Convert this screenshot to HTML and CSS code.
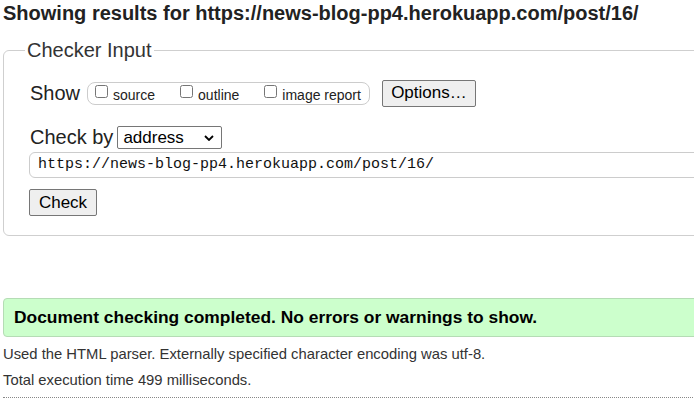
FILE: index.html
```html
<!DOCTYPE html>
<html lang="en">
<head>
<meta charset="utf-8">
<title>Showing results for https://news-blog-pp4.herokuapp.com/post/16/</title>
<link rel="stylesheet" href="styles.css">
</head>
<body>
<div class="page">
  <h2 class="title">Showing results for https://news-blog-pp4.herokuapp.com/post/16/</h2>
  <fieldset class="checker">
    <legend class="legend">Checker Input</legend>
    <div class="row show-row">
      <span class="label">Show</span>
      <span class="pill">
        <label class="opt"><input type="checkbox" class="cb"><span>source</span></label>
        <label class="opt"><input type="checkbox" class="cb"><span>outline</span></label>
        <label class="opt"><input type="checkbox" class="cb"><span>image report</span></label>
      </span>
      <button class="btn options">Options…</button>
    </div>
    <div class="row by-row">
      <span class="label">Check by</span>
      <span class="select">address<svg class="chev" viewBox="0 0 10 6" width="10" height="6"><path d="M1 1 L5 5 L9 1" fill="none" stroke="#000" stroke-width="1.8"/></svg></span>
    </div>
    <div class="url">https://news-blog-pp4.herokuapp.com/post/16/</div>
    <div class="row"><button class="btn check">Check</button></div>
  </fieldset>
  <div class="success">Document checking completed. No errors or warnings to show.</div>
  <p class="info">Used the HTML parser. Externally specified character encoding was utf-8.</p>
  <p class="info">Total execution time 499 milliseconds.</p>
  <hr class="rule">
</div>
</body>
</html>
```
FILE: styles.css
```css
html, body {
  margin: 0;
  padding: 0;
  overflow: hidden;
  background: #fff;
}
body {
  font-family: "Liberation Sans", Arial, sans-serif;
  color: #222;
}
.page {
  width: 740px;
  padding: 0 0 0 3px;
}
.title {
  margin: 0;
  padding-top: 2px;
  font-size: 20px;
  line-height: 22px;
  font-weight: bold;
  color: #222;
}
.checker {
  margin: 15px 0 0 0;
  padding: 17px 0 19px 26px;
  border: 1px solid #cfcfcf;
  border-radius: 6px;
  min-width: 0;
}
.legend {
  margin-left: -5px;
  padding: 0 2px;
  font-size: 20px;
  line-height: 22px;
  color: #333;
}
.row {
  display: flex;
  align-items: center;
}
.show-row {
  height: 30px;
}
.label {
  font-size: 20px;
  color: #222;
}
.pill {
  display: flex;
  align-items: center;
  margin-left: 7px;
  height: 21px;
  padding: 0 8px 0 7px;
  border: 1px solid #ccc;
  border-radius: 8px;
  gap: 25px;
}
.opt {
  display: flex;
  align-items: center;
  font-size: 14px;
  color: #222;
}
.cb {
  margin: 0 5px 4px 0;
  width: 13px;
  height: 13px;
}
.opt span {
  padding-top: 3px;
}
.btn {
  font-family: "Liberation Sans", Arial, sans-serif;
  font-size: 17px;
  color: #000;
  background: #efefef;
  border: 1px solid #767676;
  border-radius: 2px;
  padding: 0;
  height: 27px;
}
.options {
  margin-left: 12px;
  width: 94px;
}
.by-row {
  margin-top: 17px;
  height: 25px;
}
.select {
  display: flex;
  align-items: center;
  justify-content: space-between;
  box-sizing: border-box;
  margin-left: 4px;
  width: 105px;
  height: 23px;
  padding: 0 7px 0 5px;
  border: 1px solid #767676;
  border-radius: 2px;
  font-size: 17px;
  color: #000;
}
.url {
  margin: 2px 0 0 -1px;
  height: 24px;
  line-height: 24px;
  padding-left: 8px;
  border: 1px solid #ccc;
  border-radius: 6px;
  font-family: "Liberation Mono", "DejaVu Sans Mono", monospace;
  font-size: 15px;
  color: #111;
}
.check {
  margin: 11px 0 0 -1px;
  width: 68px;
}
.success {
  margin-top: 62px;
  height: 37px;
  line-height: 37px;
  padding-left: 10px;
  background: #ccffcc;
  border: 1px solid #b5dcb5;
  border-radius: 4px;
  font-size: 17.4px;
  font-weight: bold;
  color: #000;
}
.info {
  margin: 8px 0 0 0;
  font-size: 14.8px;
  line-height: 18px;
  color: #333;
}
.rule {
  margin: 8px 0 0 0;
  border: 0;
  border-top: 1px dotted #888;
}
```
